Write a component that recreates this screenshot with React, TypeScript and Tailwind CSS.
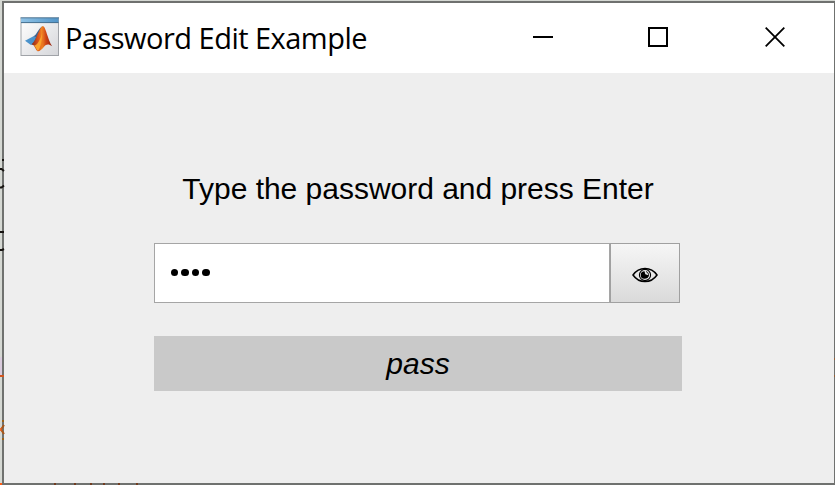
import React from "react";

function AppIcon() {
  return (
    <svg width="39" height="40" viewBox="0 0 39 40" className="block shrink-0">
      <defs>
        <linearGradient id="paper" x1="0" y1="0" x2="1" y2="1">
          <stop offset="0" stopColor="#ffffff" />
          <stop offset="1" stopColor="#d5d6da" />
        </linearGradient>
        <linearGradient id="bar" x1="0" y1="0" x2="1" y2="0">
          <stop offset="0" stopColor="#90c3e6" />
          <stop offset="1" stopColor="#5295c8" />
        </linearGradient>
        <linearGradient id="flame" x1="0" y1="0" x2="1" y2="0">
          <stop offset="0" stopColor="#8c2a16" />
          <stop offset="0.35" stopColor="#e0561c" />
          <stop offset="0.5" stopColor="#f08a24" />
          <stop offset="0.7" stopColor="#cf4315" />
          <stop offset="1" stopColor="#8f210f" />
        </linearGradient>
      </defs>
      <rect x="1" y="1.5" width="37.5" height="37" fill="url(#paper)" stroke="#a0a3a8" />
      <rect x="1" y="1" width="37.5" height="5" fill="url(#bar)" />
      <path d="M0.5 0.8H39M1 5.6H38.5" stroke="#47708f" strokeWidth="1" />
      <path d="M5 23.7L13 19.6L17.5 19.5L15 28L10.5 27.8Z" fill="#4a92cb" />
      <path d="M13 19.6C17 18 18 12 22.3 9.3L20 21L14.5 28L12 27C14.5 24 15.5 22 16 20Z" fill="#3d6390" />
      <path d="M11.5 27.3C16.5 24.5 18.8 10.5 22.8 9.1C25.8 9.3 27.5 22.5 32.2 29.3C28.5 26.5 26.3 27 24 29.8C21.5 33 19.5 34.6 17.6 34.3C15.5 33 14.8 27.8 11.5 27.3Z" fill="url(#flame)" />
      <path d="M14 28.5C17.5 28.5 20.5 22 22.3 16C22.8 23 21 31.5 17.8 34C16.3 32.8 15.8 30 14 28.5Z" fill="#f9a32c" />
      <path d="M22.6 10C24.2 16 24.2 25 21.5 31.5L18.5 33.7C21.5 28 22.3 18 22.6 10Z" fill="#e9692080" />
    </svg>
  );
}

function EyeIcon() {
  return (
    <svg width="26" height="16" viewBox="0 0 26 16" className="block" fill="none" stroke="black">
      <path d="M1 8C7 -0.7 19 -0.7 25 8C19 16.7 7 16.7 1 8Z" strokeWidth="1.5" />
      <circle cx="13" cy="8" r="5.6" strokeWidth="1.1" />
      <path d="M12.5 4.2A3.8 3.8 0 1 0 16.3 8.3L13.3 7.3Z" fill="black" stroke="none" />
      <path d="M14 4.5A3.6 3.6 0 0 1 15.2 10.8" strokeWidth="0.9" />
    </svg>
  );
}

function WindowControls() {
  return (
    <div className="ml-auto flex items-center text-black">
      <svg width="20" height="20" viewBox="0 0 20 20" className="mr-[95px]">
        <path d="M0 10H20" stroke="currentColor" strokeWidth="2" />
      </svg>
      <svg width="20" height="20" viewBox="0 0 20 20" className="mr-[97px]">
        <rect x="1" y="1" width="18" height="18" fill="none" stroke="currentColor" strokeWidth="2" />
      </svg>
      <svg width="20" height="20" viewBox="0 0 20 20" className="mr-[49px]">
        <path d="M0.7 0.7L19.3 19.3M19.3 0.7L0.7 19.3" stroke="currentColor" strokeWidth="1.8" />
      </svg>
    </div>
  );
}

/* Slivers of the document behind the window, seen at its left edge. */
function Backdrop() {
  return (
    <svg width="835" height="485" className="pointer-events-none absolute left-0 top-0" fill="none">
      <path d="M0 169H1.5L4 171M0 187.5H1.5L4 185.5M3 159V161" stroke="#15120f" strokeWidth="2" />
      <path d="M0 232H2L4 232M0 250H2L4 249" stroke="#15120f" strokeWidth="2" />
      <path d="M0 357H2V375H0Z" fill="#d9cbdc" />
      <path d="M0 376H4" stroke="#d5551c" strokeWidth="2" />
      <path d="M2 421H4M2 439H4" stroke="#996016" strokeWidth="2" />
      <path d="M4 425L1 429.5L4 434" stroke="#a85618" strokeWidth="2" />
      <path d="M0 429.5H1.5" stroke="#f36b2a" strokeWidth="3" />
      <path d="M0 484H2" stroke="#ff5b14" strokeWidth="2" />
      <path d="M54 484h2M74 484h2M90 484h2M103 484h2M118 484h2M136 484h2" stroke="#713c20" strokeWidth="2" />
      <path d="M834 359h1M834 376h1" stroke="#936039" strokeWidth="2" />
    </svg>
  );
}

export default function App() {
  return (
    <div className="relative h-[485px] w-[835px] overflow-hidden bg-[#d5d8d3] pl-[2px] pt-px font-['Liberation_Sans',Arial,sans-serif] text-black">
      <div className="flex h-[484px] w-[833px] flex-col border-2 border-r border-[#6f716f] bg-[#eeeeee]">
        <header className="flex h-[70px] shrink-0 items-center bg-white pb-[2px] pl-4">
          <AppIcon />
          <h1 className="ml-[6px] whitespace-nowrap pt-[2px] font-['Open_Sans','Noto_Sans',sans-serif] text-[29px] leading-10 tracking-[-0.52px]">
            Password Edit Example
          </h1>
          <WindowControls />
        </header>
        <main className="ml-[150px] w-[528px] pt-[96px]">
          <p className="whitespace-nowrap text-center text-[30px] leading-10 tracking-[-0.02px]">Type the password and press Enter</p>
          <div className="mt-[34px] flex h-[60px] w-[526px]">
            <div className="flex w-[456px] items-center gap-[3px] border border-[#a5a5a5] bg-white pb-px pl-[15.6px]">
              <span className="size-[7.5px] rounded-full bg-black" />
              <span className="size-[7.5px] rounded-full bg-black" />
              <span className="size-[7.5px] rounded-full bg-black" />
              <span className="size-[7.5px] rounded-full bg-black" />
            </div>
            <button className="flex w-[70px] items-center justify-center border border-[#a0a0a0] bg-linear-to-b from-[#f6f6f6] to-[#dadada] pt-1">
              <EyeIcon />
            </button>
          </div>
          <div className="mt-[33px] h-[55px] bg-[#c9c9c9] text-center text-[30px] italic leading-[55px]">pass</div>
        </main>
      </div>
      <Backdrop />
    </div>
  );
}
